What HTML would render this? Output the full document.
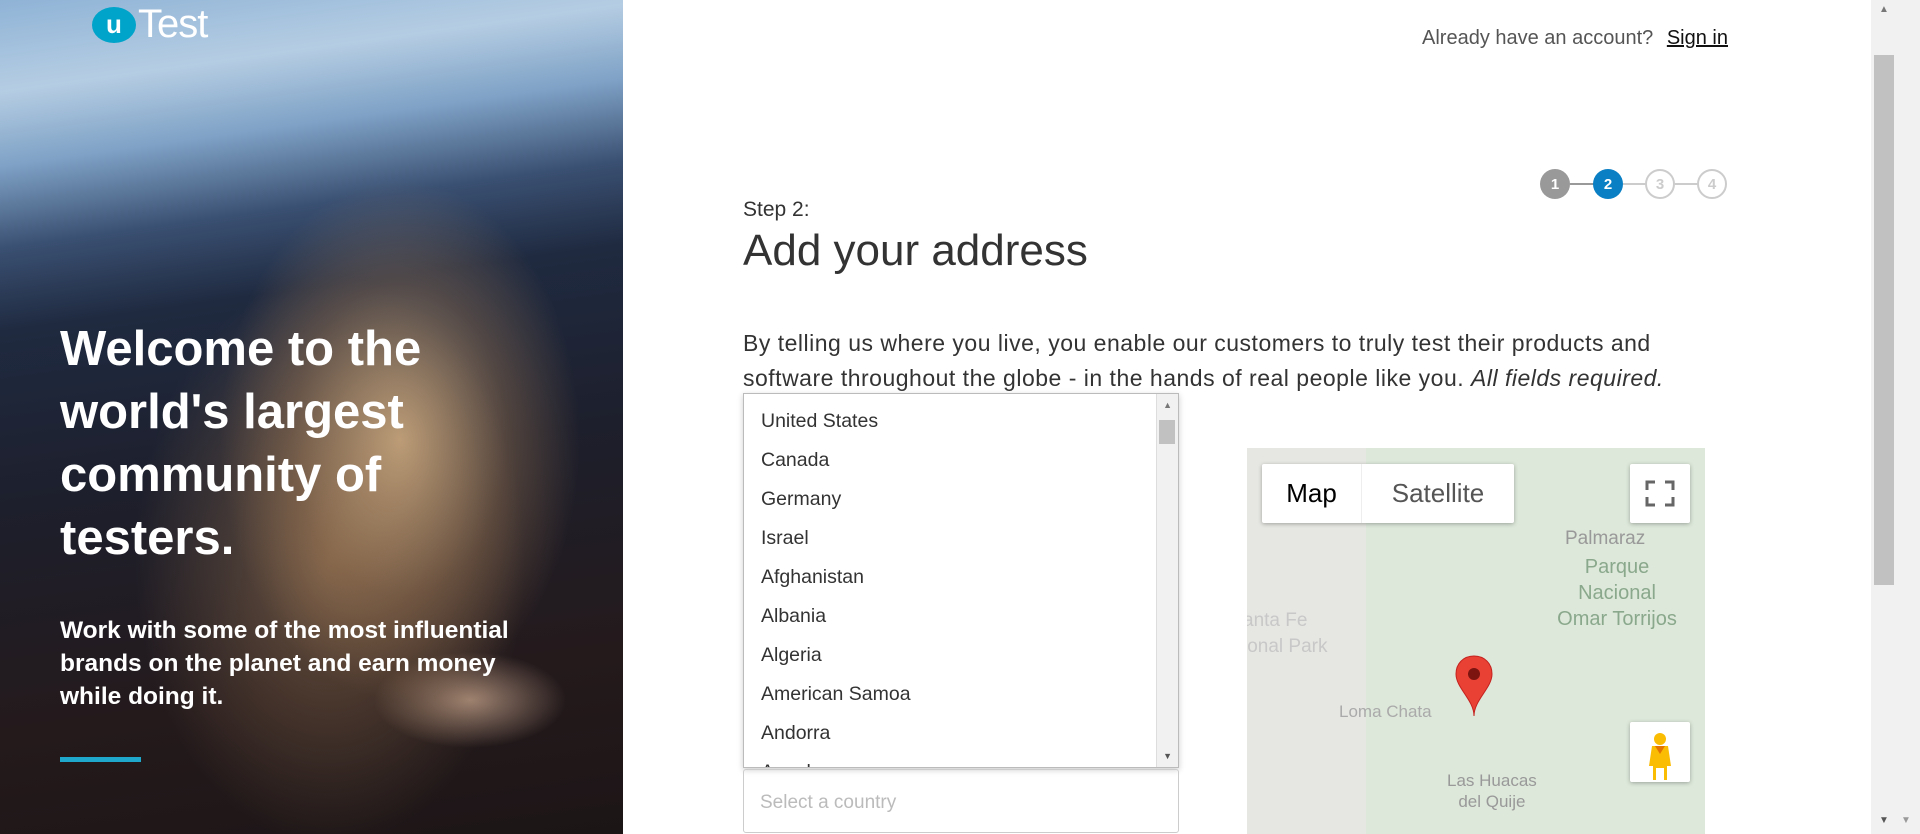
<!DOCTYPE html>
<html><head><meta charset="utf-8"><style>
*{margin:0;padding:0;box-sizing:border-box}
body{width:1920px;height:834px;overflow:hidden;background:#fff;font-family:"Liberation Sans",sans-serif;position:relative;color:#333}
.left{position:absolute;left:0;top:0;width:623px;height:834px;overflow:hidden;
background:
radial-gradient(ellipse 180px 260px at 400px 440px,rgba(230,190,140,.75),rgba(200,150,100,.3) 60%,transparent 100%),
radial-gradient(ellipse 260px 380px at 330px 560px,rgba(170,130,90,.55),transparent 75%),
radial-gradient(ellipse 120px 60px at 470px 700px,rgba(240,200,170,.6),transparent 80%),
linear-gradient(172deg,#8fb3d6 0%,#b5cde3 10%,#7fa2c6 18%,#3a5072 27%,#1f2a40 36%,#1d1f2c 55%,#241a1c 80%,#1c1516 100%);}
.logo{position:absolute;left:92px;top:2px;display:flex;align-items:center}
.logo .u{width:44px;height:36px;border-radius:50%;background:#00a3c9;color:#fff;font-weight:bold;font-size:26px;display:flex;align-items:center;justify-content:center}
.logo .t{color:#fff;font-size:40px;margin-left:2px;letter-spacing:-1px}
h1{position:absolute;left:60px;top:318px;color:#fff;font-size:49px;line-height:63px;font-weight:bold;width:420px}
.sub{position:absolute;left:60px;top:614px;color:#fff;font-size:24.5px;line-height:33px;font-weight:bold;width:480px}
.bar{position:absolute;left:60px;top:757px;width:81px;height:5px;background:#1fa8cc}
.acct{position:absolute;right:192px;top:27px;font-size:20px;color:#555}
.acct u{color:#111;margin-left:8px}
.step{position:absolute;top:169px;width:30px;height:30px;border-radius:50%;font-size:15px;font-weight:bold;color:#fff;display:flex;align-items:center;justify-content:center}
.line{position:absolute;top:183px;height:2px;background:#ccc;width:24px}
.s2{position:absolute;left:743px;top:198px;font-size:21px;color:#333}
.h2{position:absolute;left:743px;top:226px;font-size:44px;color:#333}
.p{position:absolute;left:743px;top:326px;font-size:23px;letter-spacing:0.5px;line-height:35px;color:#333;width:960px}
.dd{position:absolute;left:743px;top:393px;width:436px;height:375px;border:1px solid #bbb;background:#fff;box-shadow:0 2px 6px rgba(0,0,0,.2);overflow:hidden}
.dd div.i{height:39px;line-height:39px;padding-left:17px;font-size:19.5px;color:#333}
.dd .sb{position:absolute;right:0;top:0;width:22px;height:100%;background:#f1f1f1;border-left:1px solid #ddd}
.dd .th{position:absolute;right:3px;top:26px;width:16px;height:24px;background:#c1c1c1}
.sel{position:absolute;left:743px;top:769px;width:436px;height:64px;border:1px solid #ccc;border-radius:3px;padding:22px 16px;font-size:19px;color:#bbb}
.map{position:absolute;left:1247px;top:448px;width:458px;height:386px;background:linear-gradient(90deg,#e6e7e3 0 26%,#dde8da 26% 100%);overflow:hidden;color:#8aa88c;font-size:19px}
.ctl{position:absolute;background:#fff;box-shadow:0 1px 4px rgba(0,0,0,.3);border-radius:2px}
.sbar{position:absolute;left:1871px;top:0;width:49px;height:834px;background:#f1f1f1}
</style></head><body>
<div class="left">
<div class="logo"><div class="u">u</div><div class="t">Test</div></div>
<h1>Welcome to the world's largest community of testers.</h1>
<div class="sub">Work with some of the most influential brands on the planet and earn money while doing it.</div>
<div class="bar"></div>
</div>
<div class="acct">Already have an account? <u>Sign in</u></div>
<div class="step" style="left:1540px;background:#999">1</div>
<div class="line" style="left:1570px;background:#999"></div>
<div class="step" style="left:1593px;background:#0a7fc4">2</div>
<div class="line" style="left:1623px"></div>
<div class="step" style="left:1645px;border:2px solid #ccc;color:#ccc">3</div>
<div class="line" style="left:1675px"></div>
<div class="step" style="left:1697px;border:2px solid #ccc;color:#ccc">4</div>
<div class="s2">Step 2:</div>
<div class="h2">Add your address</div>
<div class="p">By telling us where you live, you enable our customers to truly test their products and software throughout the globe - in the hands of real people like you. <i>All fields required.</i></div>
<div style="position:absolute;left:743px;top:490px;width:436px;height:58px;border:1px solid #e35b5b"></div>
<div style="position:absolute;left:743px;top:632px;width:436px;height:58px;border:1px solid #ccc"></div>
<div class="map">
<div style="position:absolute;left:318px;top:80px;color:#999">Palmaraz</div>
<div style="position:absolute;left:290px;top:106px;text-align:center;line-height:26px;font-size:20px;width:160px">Parque<br>Nacional<br>Omar Torrijos</div>
<div style="position:absolute;left:-4px;top:160px;color:#c8c8c8;line-height:26px">anta Fe<br>ional Park</div>
<div style="position:absolute;left:92px;top:254px;color:#aaa;font-size:17px">Loma Chata</div>
<div style="position:absolute;left:200px;top:322px;color:#999;font-size:17px;text-align:center;line-height:21px">Las Huacas<br>del Quije</div>
<svg style="position:absolute;left:207px;top:207px" width="40" height="62" viewBox="0 0 40 62"><path d="M20 1C9 1 2 9 2 19c0 14 18 26 18 42 0-16 18-28 18-42C38 9 31 1 20 1z" fill="#e94235" stroke="#c5221f"/><circle cx="20" cy="19" r="6" fill="#7d1410"/></svg>
<div class="ctl" style="left:15px;top:16px;width:252px;height:59px;display:flex;font-size:26px">
<div style="width:100px;display:flex;align-items:center;justify-content:center;color:#000;border-right:1px solid #eee">Map</div>
<div style="flex:1;display:flex;align-items:center;justify-content:center;color:#555">Satellite</div></div>
<div class="ctl" style="left:383px;top:16px;width:60px;height:59px"><svg width="60" height="59"><path d="M17 26v-8h8M35 18h8v8M43 33v8h-8M25 41h-8v-8" fill="none" stroke="#666" stroke-width="3"/></svg></div>
<div class="ctl" style="left:383px;top:274px;width:60px;height:60px"><svg width="60" height="60"><circle cx="30" cy="17" r="6" fill="#fbbc04"/><path d="M22 24h16l3 20h-4v14h-3v-12h-8v12h-3V44h-4z" fill="#fbbc04"/><path d="M25 24l5 8 5-8z" fill="#e37400"/></svg></div>
</div>
<div class="dd">
<div class="i" style="margin-top:8px">United States</div><div class="i">Canada</div><div class="i">Germany</div><div class="i">Israel</div><div class="i">Afghanistan</div><div class="i">Albania</div><div class="i">Algeria</div><div class="i">American Samoa</div><div class="i">Andorra</div><div class="i">Angola</div>
<div class="sb"></div><div class="th"></div>
<div style="position:absolute;right:6px;top:6px;font-size:9px;color:#777">▲</div>
<div style="position:absolute;right:6px;bottom:6px;font-size:9px;color:#555">▼</div>
</div>
<div class="sel">Select a country</div>
<div class="sbar"><div style="position:absolute;left:3px;top:55px;width:20px;height:530px;background:#c1c1c1"></div>
<div style="position:absolute;left:8px;top:4px;font-size:10px;color:#777">▲</div>
<div style="position:absolute;left:8px;bottom:8px;font-size:10px;color:#555">▼</div>
<div style="position:absolute;left:30px;bottom:8px;font-size:10px;color:#999">▼</div></div>
</body></html>
